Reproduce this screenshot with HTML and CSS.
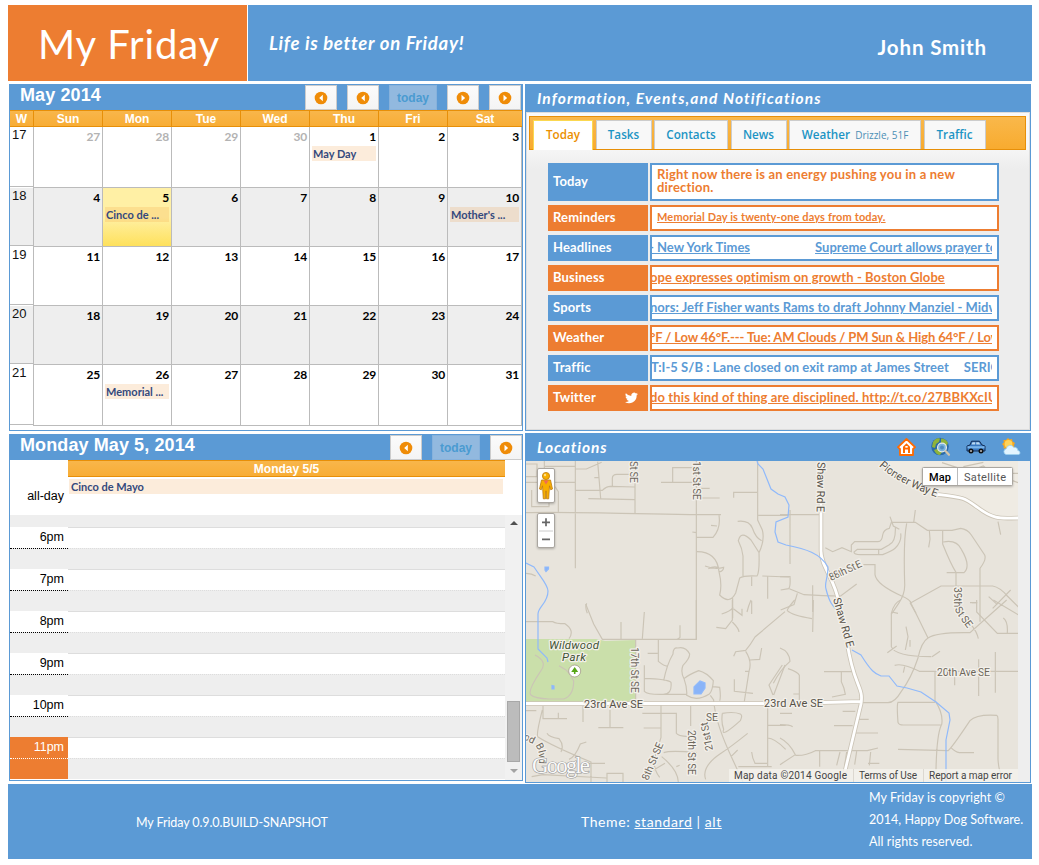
FILE: index.html
```html
<!DOCTYPE html>
<html lang="en">
<head>
<meta charset="utf-8">
<title>My Friday</title>
<link rel="stylesheet" href="styles.css">
</head>
<body>
<svg class="defs" width="0" height="0">
  <symbol id="prev" viewBox="0 0 14 14"><circle cx="7" cy="7" r="6.3" fill="#ef8c08"/><path d="M8.8 3.8v6.4L5.2 7z" fill="#fff"/></symbol>
  <symbol id="next" viewBox="0 0 14 14"><circle cx="7" cy="7" r="6.3" fill="#ef8c08"/><path d="M5.5 3.8v6.4L9.1 7z" fill="#fff"/></symbol>
</svg>
<header class="top">
  <h1 class="brand">My Friday</h1>
  <div class="banner"><span class="tagline">Life is better on Friday!</span><span class="user">John Smith</span></div>
</header>
<main class="panels">
  <section class="panel month">
    <div class="cal-bar">
      <h2 class="cal-title">May 2014</h2>
      <div class="buttons">
        <span class="btn"><svg width="14" height="14"><use href="#prev"/></svg></span>
        <span class="btn"><svg width="14" height="14"><use href="#prev"/></svg></span>
        <span class="btn today-btn">today</span>
        <span class="btn"><svg width="14" height="14"><use href="#next"/></svg></span>
        <span class="btn"><svg width="14" height="14"><use href="#next"/></svg></span>
      </div>
    </div>
    <div class="grid head"><b>W</b><b>Sun</b><b>Mon</b><b>Tue</b><b>Wed</b><b>Thu</b><b>Fri</b><b>Sat</b></div>
    <div class="grid week tall"><i>17</i><div class="day other">27</div><div class="day other">28</div><div class="day other">29</div><div class="day other">30</div><div class="day">1<span class="event">May Day</span></div><div class="day">2</div><div class="day">3</div></div>
    <div class="grid week odd"><i>18</i><div class="day">4</div><div class="day now">5<span class="event">Cinco de ...</span></div><div class="day">6</div><div class="day">7</div><div class="day">8</div><div class="day">9</div><div class="day">10<span class="event">Mother's ...</span></div></div>
    <div class="grid week"><i>19</i><div class="day">11</div><div class="day">12</div><div class="day">13</div><div class="day">14</div><div class="day">15</div><div class="day">16</div><div class="day">17</div></div>
    <div class="grid week odd"><i>20</i><div class="day">18</div><div class="day">19</div><div class="day">20</div><div class="day">21</div><div class="day">22</div><div class="day">23</div><div class="day">24</div></div>
    <div class="grid week tall"><i>21</i><div class="day">25</div><div class="day">26<span class="event">Memorial ...</span></div><div class="day">27</div><div class="day">28</div><div class="day">29</div><div class="day">30</div><div class="day">31</div></div>
  </section>

  <section class="panel info">
    <h2 class="panel-title">Information, Events,and Notifications</h2>
    <div class="info-body">
      <nav class="tabs">
        <a class="tab active t1">Today</a><a class="tab t2">Tasks</a><a class="tab t3">Contacts</a><a class="tab t4">News</a><a class="tab t5">Weather <small>Drizzle, 51F</small></a><a class="tab t6">Traffic</a>
      </nav>
      <div class="feeds">
        <div class="feed first"><div class="label">Today</div><div class="box"><p class="message">Right now there is an energy pushing you in a new direction.</p></div></div>
        <div class="feed alt"><div class="label">Reminders</div><div class="box"><p class="message"><a class="small-link">Memorial Day is twenty-one days from today.</a></p></div></div>
        <div class="feed"><div class="label">Headlines</div><div class="box"><p class="ticker"><a class="k-head">- New York Times</a><a class="k-court">Supreme Court allows prayer to</a></p></div></div>
        <div class="feed alt"><div class="label">Business</div><div class="box"><p class="ticker"><a class="k-biz">ope expresses optimism on growth - Boston Globe</a></p></div></div>
        <div class="feed"><div class="label">Sports</div><div class="box"><p class="ticker"><a class="k-sport">nors: Jeff Fisher wants Rams to draft Johnny Manziel - Midwest</a></p></div></div>
        <div class="feed alt"><div class="label">Weather</div><div class="box"><p class="ticker"><a class="k-wx">°F / Low 46°F.--- Tue: AM Clouds / PM Sun &amp; High 64°F / Low</a></p></div></div>
        <div class="feed"><div class="label">Traffic</div><div class="box"><p class="ticker"><span class="k-traf">T:I-5 S/B : Lane closed on exit ramp at James Street</span><span class="k-seri">SERIOUS</span></p></div></div>
        <div class="feed alt"><div class="label">Twitter
          <svg class="bird" width="13" height="12" viewBox="0 0 24 20"><path fill="#fff" d="M24 2.4a9.800 9.800 0 0 1-2.800.8A5 5 0 0 0 23.300.5a9.900 9.900 0 0 1-3.100 1.200 4.900 4.900 0 0 0-8.400 4.500A14 14 0 0 1 1.700 1 4.900 4.900 0 0 0 3.200 7.600 4.900 4.900 0 0 1 1 7v.1a4.900 4.900 0 0 0 3.900 4.800 5 5 0 0 1-2.200.1 4.900 4.900 0 0 0 4.600 3.400A9.900 9.900 0 0 1 0 17.400 14 14 0 0 0 21.500 5 10 10 0 0 0 24 2.400z"/></svg></div><div class="box"><p class="ticker"><a class="k-tw">do this kind of thing are disciplined. http://t.co/27BBKXcIU</a></p></div></div>
      </div>
    </div>
  </section>

  <section class="panel agenda">
    <div class="cal-bar">
      <h2 class="cal-title">Monday May 5, 2014</h2>
      <div class="buttons">
        <span class="btn"><svg width="14" height="14"><use href="#prev"/></svg></span>
        <span class="btn today-btn">today</span>
        <span class="btn"><svg width="14" height="14"><use href="#next"/></svg></span>
      </div>
    </div>
    <div class="allday">
      <div class="allday-label">all-day</div>
      <div class="allday-col"><b class="day-head">Monday 5/5</b><span class="event">Cinco de Mayo</span></div>
    </div>
    <div class="slots-wrap">
      <div class="slots">
        <div class="rest"></div>
        <div class="hour"><span>6pm</span><i></i><u></u><s></s></div>
        <div class="hour"><span>7pm</span><i></i><u></u><s></s></div>
        <div class="hour"><span>8pm</span><i></i><u></u><s></s></div>
        <div class="hour"><span>9pm</span><i></i><u></u><s></s></div>
        <div class="hour"><span>10pm</span><i></i><u></u><s></s></div>
        <div class="hour current"><span>11pm</span><i></i><u></u><s></s></div>
      </div>
      <div class="scroll"><span class="up"></span><span class="thumb"></span><span class="down"></span></div>
    </div>
  </section>

  <section class="panel places">
    <div class="places-bar">
      <h2 class="panel-title">Locations</h2>
      <div class="icons">
        <svg width="19" height="18" viewBox="0 0 19 18"><path d="M9.500 1 18 9.200 16 11V17H3v-6L1 9.200z" fill="#fff" stroke="#ff6a00" stroke-width="1.800" stroke-linejoin="round"/><path d="M9.500 5.300 13 8.800V15h-2v-3.500H8V15H6V8.800z" fill="#ff6a00"/><path d="M8.300 8h2.400v1.700H8.300z" fill="#fff"/></svg>
        <svg width="20" height="20" viewBox="0 0 20 20"><circle cx="9" cy="9.500" r="8.800" fill="#2c6aa6"/><path d="M2 5Q5 0 9 1.500L8 5 5 7 4 11 1 10zM10 1.500q5 0 7 4.500l-2 4-5-4zM3 13l5-2 3 4-2 3q-4 0-6-5z" fill="#8fb33a"/><circle cx="11" cy="10.500" r="4.400" fill="#79b2dc" stroke="#e3e9ec" stroke-width="1.300"/><circle cx="11" cy="10.500" r="2" fill="#4f8cc0"/><path d="m14.500 14 3.500 3.800" stroke="#d3c5ab" stroke-width="2.200" stroke-linecap="round"/></svg>
        <svg width="20" height="14" viewBox="0 0 20 14"><path d="M4 5 5.500 1.200h8L16 5l3 1v5H1V6z" fill="#3877bf" stroke="#142d55"/><path d="M5.500 4.500 6.500 2.200h2.700v2.300zM10.200 2.200h2.700l1.400 2.300h-4.100z" fill="#bad9f2"/><path d="M1.500 6.200h17v2.200h-17z" fill="#79b5ec"/><circle cx="5" cy="11" r="2.500" fill="#111"/><circle cx="15" cy="11" r="2.500" fill="#111"/><circle cx="5" cy="11" r="1" fill="#bbb"/><circle cx="15" cy="11" r="1" fill="#bbb"/></svg>
        <svg width="20" height="18" viewBox="0 0 20 18"><path d="m7 0 1.500 1.500L11 1l.5 2.500L14 5l-1 2 .5 2.500-3 .5L7 12l-2-1.500H2.500L2.800 8 1 6l1.800-1.500L2.500 2H5z" fill="#f8a81e"/><circle cx="7.500" cy="6" r="3.900" fill="#ffd35a"/><path d="M5 16.500a3 3 0 0 1 .3-5.800A4 4 0 0 1 12.800 9.500a3 3 0 0 1 4 3A2.200 2.200 0 0 1 18 16.500z" fill="#e2f4ff" stroke="#9dd0ef" stroke-width=".8"/></svg>
      </div>
    </div>
    <div class="map-wrap">
    <svg class="map" width="492" height="321" viewBox="526 461 492 321">
      <rect x="526" y="461" width="492" height="321" fill="#e8e4dc"/>
      <path d="M880 461h138v57h-16c-30-2-30-20-60-22-30-8-50-18-62-35z" fill="#efebe3"/>
      <path d="M526 639h70l9 2 31-1v62H526z" fill="#cadfaa"/>
      <g class="roads" transform="translate(525 430) scale(.33333)">
        <path d="M0 157H150M58 90v67M0 102h36v38H0M20 180v50h52l0-30M90 170l10 15v60M60 109h92M151 90v325M0 248c150-4 350 6 588 6M152 117h32l46-20M218 95l9 110M208 143h15M152 181h80q12-12 24-12l74 2M262 169v-24q0-12 14-12h50M190 206l139 3M330 90v160M408 157h100M443 157v-44h60M514 90v540M528 175h26M520 204h64M626 203v-16h70M698 90v180l14 30q8 30-10 68l-24-38q-30-30-38 2 12 24 14 46v60M638 274q34-4 44 20 10 30 28 38M700 256h90M582 256q6 40-18 66h-50M558 286l18 2M502 306l12 2M516 365q60 0 66 60 10 40 2 70 30 30 48-6l12-45q12-8 52-6 8-12 6-70M540 408q30 12 56 4 0 12-14 14M550 416q14-8 30-4M712 438l80 3M680 440v28M728 440v66M680 512v40M623 505v60M0 430q20 0 32 8M185 520q-6 10 2 30"/>
      </g>
      <g class="roads" transform="translate(780 430) scale(.33333)">
        <path d="M0 254h120M30 240v162M136 353l22 12 28-12 28 12 0-20 10-10h70q12 0 14-20 2-16 20-20l6-18h72l36 24h74l26-6q20 2 32 20l40 60q6 14-14 40v160M330 260l10 28 18 10M406 240l-5 38M346 290q2 46-18 54l-24 14h-72l-10 8q0 8 20 8h66q30-12 38-20 20-20 16-44M296 356v16M380 280q-10 50-6 180 2 30-18 60l-20 30M448 300l2 28-4 24M488 302v40q24 60 40 85v120M490 336q40-8 54 22 30 50 8 70H500M250 404h35v30q4 30 80 64 24 10 28 20l90-50h155q22 4 44 30l40 40M654 275l8 39M692 480l-54 55M626 500l26 24M576 518h16M230 462l-48 36q-50 0-110-4l-44-18M0 440h30q2 30-4 36l-24 4M52 490l-10 34-40 16M98 466v80M390 518l18 32M486 98l80 26 44-16 24 20 80 30M550 110l60-13M690 130h24"/>
      </g>
      <g class="roads" transform="translate(525 600) scale(.33333)">
        <path d="M0 65h84q8 6 36 6 30 20 12 45M182 12l24 60 26 46h282M288 66v50M358 36l-6 80M465 76v36q-6 6-10 6M514 0v118M400 118v66q20 16 28 14M368 160h30M332 118v180M358 196v78h0q10 10 54 9 30 2 26-36-10-10-80-12M416 242q10-50 28-80 0-20 14-18 24-6 36 18 0 14-20 34-8 20 3 40 10 28 8 50 30 20 68-4 10-10 12-40-20-24-44-30-30 12-44 24M410 283h74M556 286l10 14v14M564 260l20 2q4 30 0 40M590 42q28-8 34-20M622 0v60l-20 26-28-4M622 66q20 20 20 30M625 26l26 20v-20M678 0q-8 18-12 36M780 35l-90 76q-14 24-28 40l-30 4-6 14M662 154q20 30 10 60l-14 90M674 180l30-2 6-34M660 214h14M628 238v36l56 6M780 195l-34 90M744 285l-12-30 40-60M0 332h34M54 318v38h72M100 338v18M52 330q-18 70-14 80 40 26 160 76v60M174 318v48M255 330v54M220 383h75M66 400q6 12 36 16 16 20 6 40M184 426l-18 6q-16 40-34 46M352 340h102v60q4 8 36 10M408 316v96l-12 40q-20 44 8 80M356 384h52M497 318v60M568 318q8 60 50 150l36 78M592 340q34-6 54 2 8 4 0 20-60 54-50 26-8-20-4-48M668 400q-50 40-80 60-60 40-46 78M416 458q20-8 100 0M410 470q50 40 50 78M454 500l10-4M618 470l20-20M680 456q2 20 10 34h36M728 318v180M728 376h54M728 414q20 0 54 34M640 500h100M20 530l34-6 190 10M246 546v-26h48v26M370 520l50-30M180 490h60M30 165q40 20 16 50-40 60-28 70 10 10 54 12 30 0 44 0 30-10 30-54-12-24-24-34l-20-12"/>
      </g>
      <g class="roads" transform="translate(780 600) scale(.33333)">
        <path d="M44 0Q20 28 22 32q14 14 74 24M100 0l-2 96M0 144q28 10 30 40Q0 210-20 250M24 206q30 10 34 20v74M40 282h18M132 215h86M184 215v30q10 20 12 38l-40 8M362 0q-20 8-28 40v100q10 30 120 30M390 4l54 110M336 36l18 4M322 158l28-20M378 80l6 30-8 40M390 120v20M344 196q24-8 74 18h300M374 200l-4 18M456 170l24-16M640 0l84 50 30-48M680 0l-110 98q-100-2-126 16-20 12-30 60-20 60-50 100-20 34-40 34H242M590 0v36l62 64h62M595 116q-4-20-20-40M682 98q2-34-12-44M570 8h20M524 230v26M596 178v110M646 156v122M465 214v88q26 40 20 72M465 307H354q-4 8 0 60 2 8 16 8h114q-14 30-16 136M354 448l150 4q10-6 66-90 20-20 80-16 4 2 4 12v120q2 30 8 40M512 442q14 14 26 16h44M188 334h38M162 377h56M232 358h34M222 399h72M0 340h36M0 374q30 0 38 6M0 414q28 14 46 50l-46 30M46 466q30 2 60-14h156l32-8M119 454v46M180 456l-10 40M200 456l-6 40M230 454l-6 40M272 456l-4 40M264 490h34"/>
      </g>
      <g class="trunk">
        <path d="M526 703.500H764M823 702.500l38-1M821 500v51c0 16 14 28 18 52M847 642c7 46 17 44 14 62l-16 67M935 494c30 4 28 3 42 13 18 14 26 11 41 11"/>
        <path class="inner" d="M526 703.500H764M823 702.500l38-1M821 500v51c0 16 14 28 18 52M847 642c7 46 17 44 14 62l-16 67M935 494c30 4 28 3 42 13 18 14 26 11 41 11"/>
      </g>
      <g class="water">
        <path d="m757 461 1 3 5 5 8 20 7 5 7 3 4 8-1 12-12 5-1 10 3 10 8 3c20 4 34 8 42 22 0 12-4 16-2 22 4 16 8 18 12 22M526 563l8 4c8 12 14 18 14 24 0 12-10 16-10 23v35l9 9 1 4M852 650l9 5c10 16 14 19 20 21h8l8 10 10 2 14 4 15 10 13 11 1 7-4 20v43"/>
        <path class="pond" d="M545 567h3.500v2l-2.500 2.500-1-1.500zM552 685.500l2 .5v3h-2zM694 687l6-6 5 2 0 5-4 6-7 0z"/>
      </g>
      <g class="names">
        <text transform="translate(630 461) rotate(90)" textLength="22">St SE</text>
        <text transform="translate(692.500 461) rotate(90)" textLength="39">1st St SE</text>
        <text class="big" transform="translate(817.500 462) rotate(91)" textLength="50">Shaw Rd E</text>
        <text class="big" transform="translate(833 599) rotate(74)" textLength="51">Shaw Rd E</text>
        <text transform="translate(831 581) rotate(-25)" textLength="35">88th St E</text>
        <path id="pioneer" d="M879 466Q898 484 942 499" fill="none" stroke="none"/>
        <text class="big"><textPath href="#pioneer" textLength="66">Pioneer Way E</textPath></text>
        <path id="thirtyninth" d="M953.500 587V606Q955 613 971 633" fill="none" stroke="none"/>
        <text><textPath href="#thirtyninth" textLength="46">39th St SE</textPath></text>
        <text transform="translate(631 647) rotate(90)" textLength="46">17th St SE</text>
        <text class="big" x="584" y="708" textLength="59">23rd Ave SE</text>
        <text class="big" x="764" y="707" textLength="59">23rd Ave SE</text>
        <text x="937" y="676" textLength="53">20th Ave SE</text>
        <text transform="translate(687.500 730) rotate(90)" textLength="45">20th St SE</text>
        <text transform="translate(648 781) rotate(-67)" textLength="40">8th St SE</text>
        <text x="706" y="721" textLength="12">SE</text>
        <text transform="translate(713 750) rotate(-101)" textLength="29">21st St</text>
        <path id="blvd" d="M523 739L533 744Q540 748 539 762" fill="none" stroke="none"/>
        <text class="blvd"><textPath href="#blvd">od Blvd</textPath></text>
        <g class="park"><text x="549" y="649" textLength="50">Wildwood</text><text x="562" y="661" textLength="24">Park</text></g>
      </g>
      <circle cx="574.700" cy="671" r="6" fill="#fff" stroke="#a59b8c" stroke-width=".8"/><path d="M574.700 667l3.500 5h-2.700v2h-1.600v-2h-2.700z" fill="#58a618"/>
      <text class="google" x="532" y="773" textLength="58">Google</text>
      <rect x="729" y="769" width="289" height="13" fill="#f4f2ee" opacity=".8"/>
      <g class="credit"><text x="734" y="779" textLength="113">Map data ©2014 Google</text><text x="859" y="779" textLength="58">Terms of Use</text><text x="929" y="779" textLength="83">Report a map error</text></g>
      <path d="M853.500 769v13M923.500 769v13" stroke="#dcd8d0"/>
      <g class="control"><rect x="537.500" y="468.500" width="17" height="34" rx="1.500"/><rect x="537.500" y="513.500" width="17" height="34" rx="1.500"/><rect x="922.500" y="467.500" width="90" height="18" rx="1"/></g>
      <g fill="#f7ae00" stroke="#bd7a10" stroke-width=".8"><path d="M541.500 480h9l2 9-1.800.8-1.200-4-.8 13h-2.200l-.5-8-.5 8h-2.200l-.8-13-1.200 4-1.800-.8z"/><circle cx="546" cy="476" r="3.600"/></g><path d="M543.500 480.500h5l-2.500 4z" fill="#ef6a55"/><circle cx="545" cy="475" r="1.200" fill="#ffe08a"/>
      <path d="M539 531h14" stroke="#ccc"/><path d="M542 522.300h8M546 518.300v8M542 539.300h8" stroke="#666" stroke-width="1.700"/>
      <path d="M957.500 468v17" stroke="#bbb"/>
      <text class="map-on" x="929" y="481" textLength="22">Map</text><text class="sat" x="964" y="481" textLength="42">Satellite</text>
    </svg>
    </div>
  </section>
</main>
<footer class="foot">
  <div class="version"><span>My Friday 0.9.0.BUILD-SNAPSHOT</span></div>
  <div class="theme">Theme: <a>standard</a> | <a>alt</a></div>
  <div class="copy">My Friday is copyright ©<br>2014, Happy Dog Software.<br>All rights reserved.</div>
</footer>
</body>
</html>
```
FILE: styles.css
```css
* { box-sizing: border-box; }
body { margin: 0; padding: 5px 7px 6px 8px; width: 1039px; height: 865px; background: #fff; overflow: hidden; font-family: Lato, "Liberation Sans", sans-serif; font-variant-ligatures: none; }
h1, h2, p { margin: 0; }
b { font-weight: bold; }
.defs { position: absolute; }

.top { display: grid; grid-template: 76px / 239px 784px; gap: 1px; }
.brand { background: #ed7d31; color: #fff; font-size: 40px; font-weight: 400; line-height: 76px; padding: 1px 0 0 30px; height: 76px; letter-spacing: .9px; white-space: nowrap; }
.banner { background: #5b9ad5; color: #fff; display: flex; justify-content: space-between; padding: 0 45px 0 21px; font-weight: bold; line-height: 76px; height: 76px; }
.tagline { font-size: 18.500px; font-style: italic; letter-spacing: .72px; }
.user { font-size: 20.500px; letter-spacing: .85px; padding-top: 4px; line-height: 76px; height: 76px; }

.panels { display: grid; grid-template-columns: 514px 506px; column-gap: 2px; padding: 3px 0 0 1px; height: 703px; grid-template-rows: 347px 350px; row-gap: 2px; }
.panel { border: 1px solid #5b9ad5; background: #fff; overflow: hidden; min-width: 0; }
.agenda { margin: 1px 0 2px; }

.cal-bar { background: #5b9ad5; height: 25px; display: flex; justify-content: space-between; }
.cal-title { font: bold 18px/21px "Liberation Sans", Arial, sans-serif; color: #fff; padding-left: 10px; letter-spacing: .1px; }
.buttons { display: flex; gap: 10px; }
.month .buttons { padding-right: 1px; }
.btn { width: 32px; height: 25px; border: 1px solid #ccc; background: linear-gradient(#fbfbfb, #f4f4f4); display: flex; align-items: center; justify-content: center; }
.today-btn { width: 48px; background: #92b9df; border-color: #87b2dc; color: #4a9bd1; font: bold 12px "Liberation Sans", Arial, sans-serif; }

.grid { display: grid; grid-template-columns: 23px repeat(6, 69px) 75px; }
.head { height: 17px; background: linear-gradient(#f8b64b, #f8ad35); border: 1px solid #e78f08; border-width: 1px 0; }
.head b { color: #fff; font: bold 12px/16px "Liberation Sans", Arial, sans-serif; text-align: center; height: 15px; }
.head b + b { border-left: 1px solid #e78f08; }
.week { height: 59px; }
.week.tall { height: 61px; }
.week i { font: 13px/16px "Liberation Sans", Arial, sans-serif; color: #111; padding-left: 2px; border-bottom: 1px solid #bbb; margin-bottom: 1px; }
.day { border-left: 1px solid #bbb; border-bottom: 1px solid #bbb; padding: 1px 2px 0; text-align: right; font-size: 12px; line-height: 17px; font-weight: bold; color: #000; letter-spacing: -.2px; }
.day:last-child { border-right: 1px solid #bbb; }
.odd .day, .odd i { background: #eee; }
.day.other { color: #b3b3b3; }
.odd .now { background: linear-gradient(#fff0a5 50%, #fee15c); }
.event { display: block; text-align: left; background: rgba(235,135,30,.16); color: #34497d; font-size: 11px; font-weight: bold; line-height: 15px; height: 15px; padding-left: 1px; margin-top: 1px; letter-spacing: 0; white-space: nowrap; }

.panel-title { color: #fff; font-size: 15.500px; font-style: italic; font-weight: bold; letter-spacing: 1.1px; line-height: 27px; height: 28px; padding-left: 11px; background: #5b9ad5; white-space: nowrap; }
.places .panel-title { letter-spacing: .9px; }
.info .panel-title { height: 27px; line-height: 26px; }
.info-body { height: 318px; border: 1px solid #ddd; background: linear-gradient(#f9f9f9, #f6f6f6 35px, #ededed 56px, #ededed); padding: 3px 3px 0 2px; }
.tabs { height: 34px; border: 1px solid #e78f08; background: linear-gradient(#f9b84b, #f8ab2f); padding: 3px 0 0 3px; display: flex; gap: 2.500px; }
.tab { height: 29px; border: 1px solid #ccc; border-bottom: 0; background: #f8f8f8; color: #1c94c4; font: 600 11.700px/27px "Open Sans", sans-serif; text-align: center; white-space: nowrap; }
.tab small { font-size: 10px; font-weight: 400; color: #4c8fb5; margin-left: 2px; }
.tab.active { background: #fff; border-color: #fbd850; color: #eb8f00; height: 30px; }
.t1 { width: 60px; } .t2 { width: 56px; } .t3 { width: 74px; } .t4 { width: 56px; } .t5 { width: 132px; } .t6 { width: 62px; }
.feeds { display: grid; gap: 4px; margin: 13px 0 0 19px; width: 451px; }
.feed { display: grid; grid-template-columns: 100px 349px; gap: 2px; height: 26px; color: #5b9ad5; font-size: 13px; font-weight: bold; }
.feed.alt { color: #ed7d31; }
.feed.first { height: 38px; }
.label { background: #5b9ad5; color: #fff; display: flex; align-items: center; padding: 0 10px 2px 5px; letter-spacing: .15px; }
.alt .label { background: #ed7d31; }
.bird { margin: 1px 0 0 auto; }
.box { background: #fff; border: 2px solid; padding-right: 5px; display: flex; align-items: center; min-width: 0; }
.message { padding: 0 0 3px 5px; line-height: 13px; letter-spacing: .2px; }
.first .message { color: #ed7d31; }
.ticker { width: 100%; height: 20px; line-height: 18px; overflow: hidden; white-space: nowrap; display: flex; }
.box a, .theme a { text-decoration: underline; }
.small-link { font-size: 11px; letter-spacing: .14px; }
.k-head { margin-left: -3px; }
.k-court { margin-left: 65px; }
.k-biz { margin-left: -2px; letter-spacing: .08px; }
.k-sport { margin-left: -2px; letter-spacing: .03px; }
.k-wx { margin-left: -2px; letter-spacing: -.12px; }
.k-traf { margin-left: -1px; letter-spacing: .04px; }
.k-seri { margin-left: 15px; }
.k-tw { margin-left: -2px; letter-spacing: .12px; }

.allday { display: grid; grid-template-columns: 58px 437px; height: 55px; }
.allday-label, .hour span { font: 12.500px "Liberation Sans", Arial, sans-serif; text-align: right; padding-right: 4px; }
.allday-label { padding-top: 29px; }
.day-head { display: block; height: 17px; background: linear-gradient(#f8b64b, #f8ad35); border: 1px solid #e78f08; border-width: 1px 0; color: #fff; font: bold 12px/16px "Liberation Sans", Arial, sans-serif; text-align: center; }
.allday-col .event { margin: 2px 2px 0 1px; padding-left: 2px; }
.slots-wrap { display: grid; grid-template-columns: 495px 17px; }
.rest { height: 12px; background: #eee; }
.hour { display: grid; grid-template: 21px 21px / 58px 437px; }
.hour span { line-height: 21px; border-bottom: 1px dotted #000; height: 22px; z-index: 1; }
.hour i { border-top: 1px solid #ddd; }
.hour u, .hour s { background: #eee; }
.hour s { border-top: 1px dotted #ddd; }
.current span { background: #ed7d31; color: #fff; border-color: #fff; }
.current u { background: #ed7d31; }
.scroll { background: #f1f1f1; display: grid; grid-template-rows: 186px 61px 18px; justify-items: center; }
.thumb { width: 13px; background: #bcbcbc; border: 1px solid #a8a8a8; }
.up, .down { width: 0; height: 0; border: 4px solid transparent; }
.up { border-bottom-color: #505050; margin-top: 2px; }
.down { border-top-color: #a3a3a3; margin-top: 7px; }

.places-bar { display: flex; justify-content: space-between; background: #5b9ad5; height: 27px; }
.icons { display: flex; gap: 15px; align-items: center; padding: 0 9.500px 1px 0; }
.map-wrap { background: #eee; height: 321px; }
.map { display: block; }
.roads { fill: none; stroke: #cbc4b6; stroke-width: 3.500; }
.trunk path { fill: none; stroke: #cbc4b6; stroke-width: 4.500; }
.trunk .inner { stroke: #fff; stroke-width: 2.800; }
.water path { fill: none; stroke: #8fb9fb; stroke-width: 1.200; }
.water .pond { fill: #8ab4f8; }
.names text { font: 10.500px Roboto, sans-serif; fill: #6d675c; stroke: #f3f0ea; stroke-width: 2.500; paint-order: stroke; stroke-linejoin: round; }
.names .big { font-size: 11px; fill: #565148; }
.names .blvd { font-size: 10px; }
.names .park text { font-style: italic; font-size: 11.500px; fill: #3d5232; }
.google { font: 23px "Liberation Serif", serif; fill: #fafafa; stroke: #999; stroke-width: 1.200; paint-order: stroke; }
.credit text { font: 10px Roboto, sans-serif; fill: #444; }
.control rect { fill: #fff; stroke: #aaa6a0; filter: drop-shadow(0 1px 1px rgba(0,0,0,.25)); }
.map-on { font: 500 11px Roboto, sans-serif; }
.sat { font: 11px Roboto, sans-serif; fill: #555; }

.foot { width: 1024px; height: 75px; background: #5b9ad5; color: #fff; display: grid; grid-template-columns: 573px 288px 1fr; font-size: 12.500px; }
.version { padding: 30px 0 0 128px; line-height: 17px; letter-spacing: -.1px; }
.theme { padding-top: 28px; line-height: 19px; font-size: 14px; letter-spacing: .58px; }
.copy { line-height: 22px; padding-top: 3px; letter-spacing: .08px; white-space: nowrap; }
```
